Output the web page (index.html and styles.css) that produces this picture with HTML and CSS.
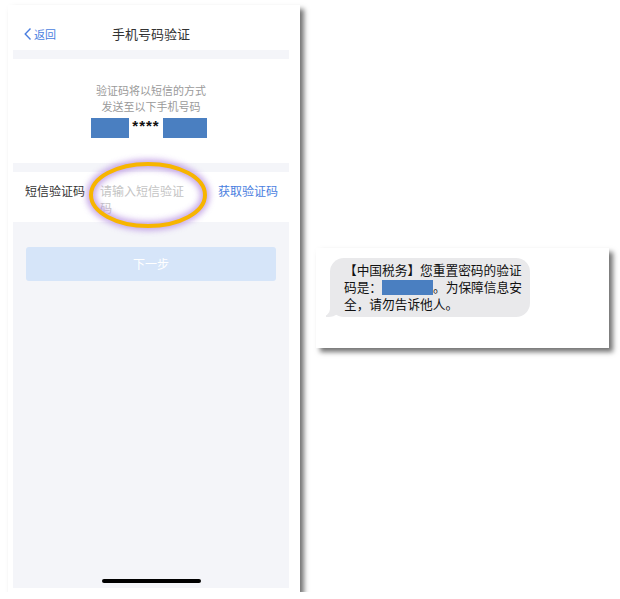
FILE: index.html
```html
<!DOCTYPE html>
<html lang="zh-CN">
<head>
  <meta charset="UTF-8">
  <meta name="viewport" content="width=device-width, initial-scale=1.0">
  <title>手机号码验证</title>
  <link rel="stylesheet" href="styles.css">
</head>
<body>
  <!-- Phone screenshot -->
  <div class="phone-card">
    <div class="screen">
      <div class="nav">
        <div class="back">
          <svg class="chevron" width="8" height="12" viewBox="0 0 8 12"><polyline points="6.5,0.5 1.2,6 6.5,11.5" fill="none" stroke="#4a7ee0" stroke-width="1.4"/></svg>
          <span>返回</span>
        </div>
        <div class="nav-title">手机号码验证</div>
      </div>
      <div class="band"></div>
      <div class="info">
        <p>验证码将以短信的方式</p>
        <p>发送至以下手机号码</p>
        <div class="phone-no">
          <span class="mask mask-a"></span>
          <span class="stars">****</span>
          <span class="mask mask-b"></span>
        </div>
      </div>
      <div class="band"></div>
      <div class="code-row">
        <span class="code-label">短信验证码</span>
        <span class="code-input">请输入短信验证码</span>
        <span class="code-get">获取验证码</span>
      </div>
      <div class="rest">
        <div class="next-btn">下一步</div>
        <div class="home-bar"></div>
      </div>
    </div>
    <!-- highlight ring drawn over the input -->
    <svg class="ring" width="140" height="84" viewBox="0 0 140 84">
      <defs>
        <filter id="glow" x="-20%" y="-30%" width="140%" height="160%">
          <feGaussianBlur stdDeviation="3"/>
        </filter>
      </defs>
      <ellipse cx="70" cy="42" rx="57" ry="31" fill="none" stroke="#b58ee0" stroke-width="9" opacity="0.8" filter="url(#glow)"/>
      <ellipse cx="70" cy="42" rx="57" ry="31" fill="none" stroke="#f7b500" stroke-width="4"/>
    </svg>
  </div>

  <!-- SMS screenshot -->
  <div class="sms-card">
    <div class="bubble">【中国税务】您重置密码的验证<br>码是：<span class="code-mask"></span>。为保障信息安<br>全，请勿告诉他人。</div>
  </div>
</body>
</html>
```

FILE: styles.css
```css
* {
  margin: 0;
  padding: 0;
  box-sizing: border-box;
}
html, body {
  background: #fff;
}
body {
  display: flex;
  align-items: flex-start;
  font-family: "Noto Sans CJK SC", "Noto Sans", sans-serif;
  color: #333;
}

/* Phone screenshot card */
.phone-card {
  position: relative;
  width: 292px;
  height: 587px;
  margin: 5px 0 0 8px;
  padding: 0 11px 4px 5px;
  background: #fff;
  box-shadow: 4px 4px 5px rgba(0, 0, 0, 0.55);
}
.screen {
  display: flex;
  flex-direction: column;
  height: 100%;
  background: #f4f5f9;
}
.nav {
  position: relative;
  height: 45px;
  padding-top: 19px;
  background: #fff;
}
.back {
  position: absolute;
  left: 11px;
  top: 23px;
  display: flex;
  align-items: center;
  gap: 2px;
  font-size: 11px;
  line-height: 12px;
  color: #4a7ee0;
}
.nav-title {
  text-align: center;
  font-size: 13px;
  line-height: 20px;
  color: #333;
}
.band {
  height: 9px;
}
.info {
  height: 104px;
  padding-top: 23px;
  background: #fff;
  text-align: center;
  font-size: 11px;
  line-height: 16px;
  color: #9a9a9a;
}
.phone-no {
  display: flex;
  justify-content: center;
  margin-top: 4px;
  padding-right: 4px;
  height: 20px;
}
.mask {
  background: #4a7fc1;
  height: 20px;
}
.mask-a { width: 38px; }
.mask-b { width: 44px; }
.stars {
  width: 34px;
  text-align: center;
  font-family: "Liberation Sans", sans-serif;
  font-weight: bold;
  font-size: 15px;
  line-height: 16px;
  letter-spacing: 1px;
  color: #111;
}
.code-row {
  display: flex;
  align-items: flex-start;
  height: 50px;
  padding: 10px 11px 0 12px;
  background: #fff;
  font-size: 12px;
  line-height: 17px;
}
.code-label {
  width: 75px;
  color: #333;
}
.code-input {
  width: 88px;
  color: #c4c4c4;
}
.code-get {
  margin-left: auto;
  color: #4a7ee0;
}
.rest {
  flex: 1;
  display: flex;
  flex-direction: column;
  align-items: center;
  padding: 25px 13px 5px;
}
.next-btn {
  align-self: stretch;
  height: 34px;
  border-radius: 3px;
  background: #d6e5f9;
  color: #fff;
  font-size: 12px;
  line-height: 34px;
  text-align: center;
}
.home-bar {
  margin-top: auto;
  width: 99px;
  height: 4px;
  border-radius: 2px;
  background: #000;
}
.ring {
  position: absolute;
  left: 70px;
  top: 148px;
}

/* SMS screenshot card */
.sms-card {
  width: 293px;
  height: 100px;
  margin: 248px 0 0 16px;
  padding: 10px 0 0 14px;
  background: #fff;
  box-shadow: 4px 4px 5px rgba(0, 0, 0, 0.55);
}
.bubble {
  position: relative;
  width: 200px;
  padding: 3px 4px 5px 14px;
  border-radius: 14px;
  background: #e9e9eb;
  font-size: 12.7px;
  line-height: 17px;
  color: #111;
}
.bubble::before {
  content: "";
  position: absolute;
  left: -4px;
  bottom: 0;
  width: 16px;
  height: 14px;
  background: #e9e9eb;
  border-bottom-right-radius: 14px 12px;
}
.bubble::after {
  content: "";
  position: absolute;
  left: -10px;
  bottom: 0;
  width: 10px;
  height: 14px;
  background: #fff;
  border-bottom-right-radius: 10px 8px;
}
.code-mask {
  display: inline-block;
  width: 51px;
  height: 15px;
  vertical-align: -3px;
  background: #4a7fc1;
}
```
